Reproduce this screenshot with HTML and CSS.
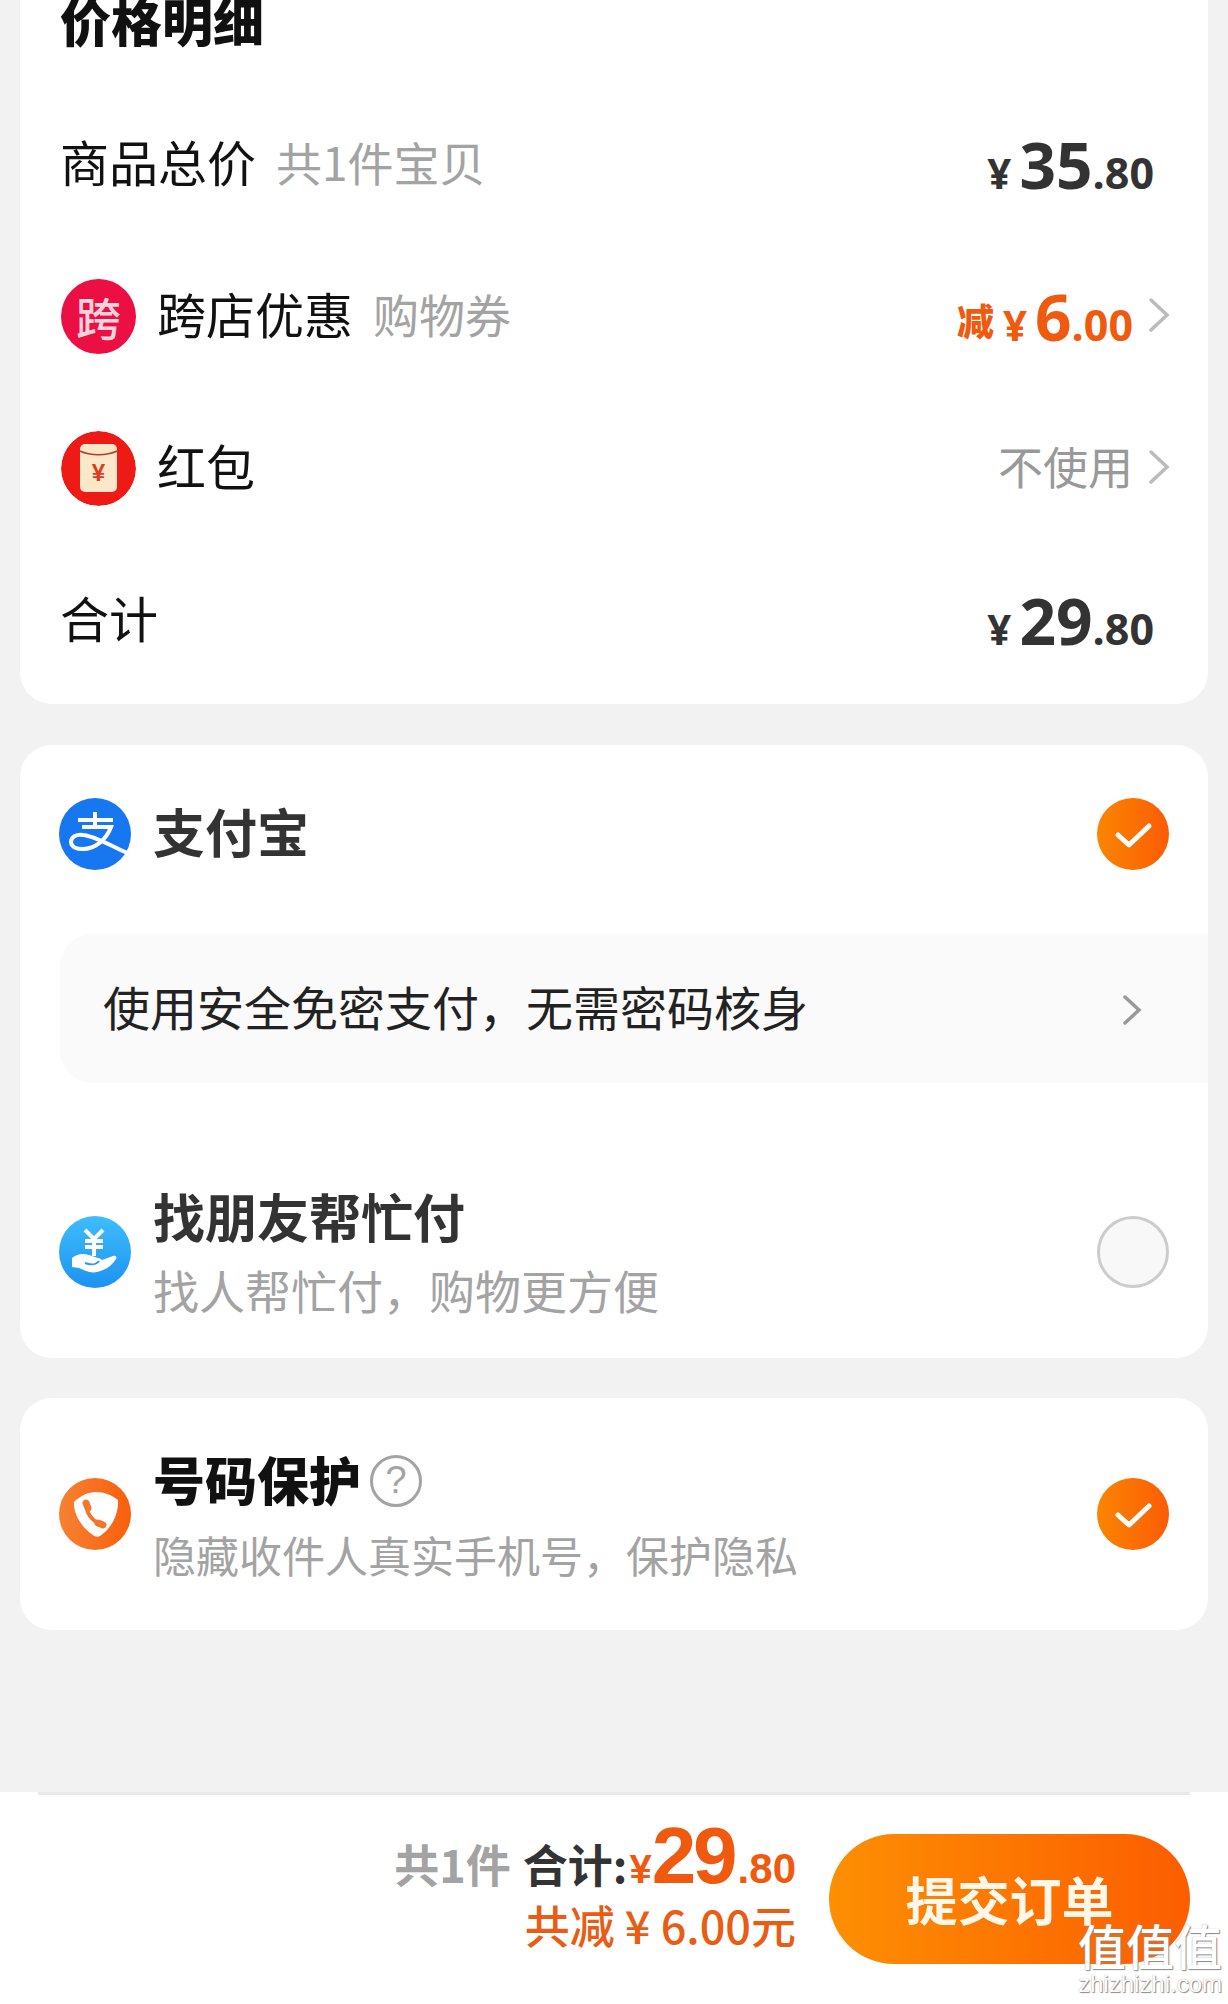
FILE: index.html
```html
<!DOCTYPE html>
<html lang="zh-CN">
<head>
    <meta charset="UTF-8">
    <meta name="viewport" content="width=device-width, initial-scale=1.0">
    <title>确认订单</title>
    <link rel="stylesheet" href="styles.css">
</head>
<body>
    <main class="page">
        <!-- 价格明细 -->
        <section class="card price-card">
            <h2 class="price-title">价格明细</h2>

            <div class="price-row">
                <span class="row-name">商品总价</span>
                <span class="row-note">共1件宝贝</span>
                <span class="amount plain">
                    <span class="yen">¥</span><span class="big">35</span><span class="small">.80</span>
                </span>
            </div>

            <div class="price-row">
                <span class="badge badge-cross">跨</span>
                <span class="row-name">跨店优惠</span>
                <span class="row-note">购物券</span>
                <span class="amount discount">
                    <span class="minus">减</span><span class="yen">¥</span><span class="big">6</span><span class="small">.00</span>
                </span>
                <svg class="arrow" viewBox="0 0 22 36"><path d="M3 3l16 15L3 33"/></svg>
            </div>

            <div class="price-row">
                <svg class="badge" viewBox="0 0 75 75">
                    <circle cx="37.5" cy="37.5" r="37.5" fill="#ee1a16"/>
                    <rect x="19" y="13" width="37" height="48" rx="5" fill="#fbe8c8"/>
                    <path class="packet-flap" d="M19 20c10 5 27 5 37 0"/>
                    <text class="packet-yen" x="37.5" y="50" text-anchor="middle">¥</text>
                </svg>
                <span class="row-name">红包</span>
                <span class="unused">不使用</span>
                <svg class="arrow" viewBox="0 0 22 36"><path d="M3 3l16 15L3 33"/></svg>
            </div>

            <div class="price-row">
                <span class="row-name">合计</span>
                <span class="amount plain">
                    <span class="yen">¥</span><span class="big">29</span><span class="small">.80</span>
                </span>
            </div>
        </section>

        <!-- 支付方式 -->
        <section class="card pay-card">
            <div class="pay-row alipay-row">
                <svg class="pay-icon" viewBox="0 0 72 72">
                    <circle cx="36" cy="36" r="36" fill="#1677f0"/>
                    <path class="alipay-mark" d="M19 22h35M36 14v14M23 29h29C47 42 36 51 24 51c-8 0-12-3-12-7 0-5 5-8 12-7 12 1 26 10 44 18"/>
                </svg>
                <span class="pay-name">支付宝</span>
                <span class="check">
                    <svg viewBox="0 0 72 72"><path d="M21 37l11 10 20-19"/></svg>
                </span>
            </div>

            <div class="free-pay">
                <span class="free-text">使用安全免密支付，无需密码核身</span>
                <svg class="free-arrow" viewBox="0 0 20 32"><path d="M3 3l14 13L3 29"/></svg>
            </div>

            <div class="pay-row friend-row">
                <svg class="pay-icon" viewBox="0 0 72 72">
                    <defs>
                        <linearGradient id="friendBg" x1="0" y1="0" x2="0" y2="1">
                            <stop offset="0" stop-color="#3fbdfc"/>
                            <stop offset="1" stop-color="#1c93f0"/>
                        </linearGradient>
                    </defs>
                    <circle cx="36" cy="36" r="36" fill="url(#friendBg)"/>
                    <path class="friend-yen" d="M26 14l9 9 9-9M26 25h18M26 31h18M35 23v17"/>
                    <path class="friend-hand" d="M13 42c5-4 11-5 17-3l9 3c2 0 3 1 4 2l11-4c3-1 4 1 3 3-3 5-8 9-13 11-6 3-12 3-17 1l-7-3-7-1z"/>
                    <path class="friend-palm" d="M26 47c5 2 11 2 14-2"/>
                </svg>
                <div class="pay-text">
                    <span class="pay-name">找朋友帮忙付</span>
                    <span class="pay-note">找人帮忙付，购物更方便</span>
                </div>
                <span class="radio"></span>
            </div>
        </section>

        <!-- 号码保护 -->
        <section class="card protect-card">
            <div class="pay-row protect-row">
                <svg class="pay-icon" viewBox="0 0 72 72">
                    <defs>
                        <linearGradient id="protectBg" x1="0" y1="0" x2="1" y2="0">
                            <stop offset="0" stop-color="#f58232"/>
                            <stop offset="1" stop-color="#f95f0c"/>
                        </linearGradient>
                    </defs>
                    <circle cx="36" cy="36" r="36" fill="url(#protectBg)"/>
                    <path fill="#fff" d="M37 14c8 0 16 3 22 8 1 14-7 29-18 36-2 1-5 1-7-1C23 50 14 36 15 24c6-6 14-10 22-10z"/>
                    <path class="phone" d="M28 27c-1 8 5 16 14 19"/>
                    <path class="phone-end" d="M27 25l2 5M39 45l5 2"/>
                </svg>
                <div class="pay-text">
                    <div class="name-line">
                        <span class="pay-name protect-name">号码保护</span>
                        <span class="help">?</span>
                    </div>
                    <span class="pay-note protect-note">隐藏收件人真实手机号，保护隐私</span>
                </div>
                <span class="check">
                    <svg viewBox="0 0 72 72"><path d="M21 37l11 10 20-19"/></svg>
                </span>
            </div>
        </section>

        <!-- 底部提交栏 -->
        <footer class="submit-bar">
            <div class="bar-line"></div>
            <div class="bar-body">
                <div class="submit-sum">
                    <div class="sum-line">
                        <span class="sum-count">共1件</span>
                        <span class="sum-label">合计:</span>
                        <span class="sum-yen">¥</span><span class="sum-big">29</span><span class="sum-small">.80</span>
                    </div>
                    <div class="sum-saved">共减 ¥ 6.00元</div>
                </div>
                <button class="submit-btn">提交订单</button>
            </div>
        </footer>
    </main>

    <div class="site-mark">
        <span class="mark-cn">值值值</span>
        <span class="mark-en">zhizhizhi.com</span>
    </div>
</body>
</html>
```

FILE: styles.css
```css
* {
    box-sizing: border-box;
}
html, body {
    margin: 0;
    height: 2004px;
    overflow: hidden;
}
body {
    position: relative;
    background-color: #f2f2f2;
    font-family: "Noto Sans CJK SC", "Liberation Sans", sans-serif;
    color: #111;
}
.page {
    display: flex;
    flex-direction: column;
    height: 2004px;
}
.card {
    margin: 0 20px;
    background-color: #fff;
    border-radius: 32px;
}

/* 价格明细 */
.price-card {
    height: 704px;
    border-radius: 0 0 32px 32px;
}
.price-title {
    height: 60px;
    margin: -10px 0 38px 40px;
    font-size: 51px;
    line-height: 60px;
    font-weight: 900;
}
.price-row {
    display: flex;
    align-items: center;
    height: 152px;
    padding: 0 38px 0 40px;
}
.row-name {
    margin-top: -6px;
    font-size: 49px;
    line-height: 60px;
}
.row-note {
    margin: -6px 0 0 20px;
    font-size: 46px;
    color: #a3a3a3;
}
.badge {
    display: flex;
    align-items: center;
    justify-content: center;
    flex-shrink: 0;
    width: 75px;
    height: 75px;
    margin: 0 21px 0 1px;
    border-radius: 50%;
}
.badge-cross {
    background-color: #ec0f43;
    color: #fbd3dd;
    font-size: 45px;
    font-weight: 500;
}
.packet-flap {
    fill: none;
    stroke: #b93a2c;
    stroke-width: 1.5;
}
.packet-yen {
    font-family: "Liberation Sans", sans-serif;
    font-size: 24px;
    font-weight: 700;
    fill: #dd3a22;
}
.amount {
    display: flex;
    align-items: baseline;
    margin-top: 3px;
    margin-left: auto;
    font-family: "Open Sans", sans-serif;
    font-weight: 700;
    color: #333;
}
.amount.plain {
    margin-right: 16px;
}
.amount.discount {
    color: #f05a0e;
}
.minus {
    align-self: flex-end;
    margin: 0 9px 14px 0;
    font-family: "Noto Sans CJK SC", sans-serif;
    font-size: 37px;
    line-height: 40px;
    font-weight: 900;
}
.yen {
    margin-right: 8px;
    font-size: 42px;
}
.big {
    font-size: 64px;
    line-height: 70px;
}
.small {
    font-size: 43px;
}
.arrow {
    flex-shrink: 0;
    width: 22px;
    height: 36px;
    margin-left: 15px;
    margin-top: -2px;
    fill: none;
    stroke: #bbb;
    stroke-width: 3.5;
    stroke-linecap: round;
}
.unused {
    margin-top: -5px;
    margin-left: auto;
    font-size: 45px;
    color: #999;
}

/* 支付方式 */
.pay-card {
    height: 613px;
    margin-top: 41px;
    overflow: hidden;
}
.pay-row {
    display: flex;
    align-items: center;
    padding: 0 39px;
}
.pay-icon {
    flex-shrink: 0;
    width: 72px;
    height: 72px;
    margin-right: 22px;
}
.pay-name {
    font-size: 52px;
    line-height: 60px;
    font-weight: 700;
    color: #333;
}
.alipay-row {
    height: 178px;
}
.alipay-row .pay-name {
    margin-top: -6px;
}
.alipay-mark {
    fill: none;
    stroke: #fff;
    stroke-width: 4;
}
.check {
    display: block;
    flex-shrink: 0;
    width: 72px;
    height: 72px;
    margin-left: auto;
    border-radius: 50%;
    background: linear-gradient(90deg, #fb8500, #fb5c05);
}
.check svg {
    display: block;
    fill: none;
    stroke: #fff;
    stroke-width: 5;
    stroke-linecap: round;
    stroke-linejoin: round;
}
.free-pay {
    display: flex;
    align-items: center;
    justify-content: space-between;
    height: 149px;
    margin: 11px 0 0 40px;
    padding: 0 66px 0 43px;
    border-radius: 32px 0 0 32px;
    background-color: #fafafa;
}
.free-text {
    margin-top: -6px;
    font-size: 47px;
    color: #222;
}
.free-arrow {
    width: 20px;
    height: 32px;
    margin-top: 2px;
    fill: none;
    stroke: #999;
    stroke-width: 3.5;
    stroke-linecap: round;
}
.friend-row {
    height: 218px;
    margin-top: 60px;
}
.friend-yen {
    fill: none;
    stroke: #fff;
    stroke-width: 4;
}
.friend-hand {
    fill: #fff;
}
.friend-palm {
    fill: none;
    stroke: #2a9cf0;
    stroke-width: 2;
}
.pay-text {
    display: flex;
    flex-direction: column;
}
.pay-note {
    font-size: 46px;
    line-height: 60px;
    color: #a3a3a3;
}
.friend-row .pay-name {
    margin-bottom: 13px;
}
.radio {
    flex-shrink: 0;
    width: 72px;
    height: 72px;
    margin-left: auto;
    border: 3px solid #ccc;
    border-radius: 50%;
    background-color: #f8f8f8;
}

/* 号码保护 */
.protect-card {
    height: 232px;
    margin-top: 40px;
}
.protect-row {
    height: 232px;
}
.protect-row .pay-text {
    margin-top: 4px;
}
.phone {
    fill: none;
    stroke: #f5762a;
    stroke-width: 4;
}
.phone-end {
    fill: none;
    stroke: #f5762a;
    stroke-width: 7;
    stroke-linecap: round;
}
.name-line {
    display: flex;
    align-items: center;
    margin-bottom: 15px;
}
.protect-name {
    font-weight: 900;
    color: #111;
}
.protect-note {
    font-size: 43px;
}
.help {
    display: flex;
    align-items: center;
    justify-content: center;
    width: 52px;
    height: 52px;
    margin: 4px 0 0 9px;
    border: 3px solid #a3a3a3;
    border-radius: 50%;
    font-family: "Liberation Sans", sans-serif;
    font-size: 38px;
    color: #a3a3a3;
}

/* 底部提交栏 */
.submit-bar {
    display: flex;
    flex-direction: column;
    height: 212px;
    margin-top: auto;
    background-color: #fff;
}
.bar-line {
    flex-shrink: 0;
    height: 3px;
    margin: 0 38px;
    background-color: #e9e9e9;
}
.bar-body {
    display: flex;
    flex: 1;
    align-items: center;
    justify-content: flex-end;
    padding-right: 38px;
}
.submit-sum {
    display: flex;
    flex-direction: column;
    align-items: flex-end;
    margin-right: 33px;
    margin-top: -23px;
}
.sum-line {
    display: flex;
    align-items: baseline;
    height: 74px;
    font-weight: 700;
}
.sum-count {
    margin-right: 12px;
    font-size: 45px;
    color: #a3a3a3;
}
.sum-label {
    margin-right: 2px;
    font-size: 45px;
    color: #333;
}
.sum-yen, .sum-big, .sum-small {
    font-family: "Liberation Sans", sans-serif;
    color: #f05a0e;
}
.sum-yen {
    font-size: 40px;
}
.sum-big {
    font-size: 80px;
    line-height: 70px;
    letter-spacing: -3px;
}
.sum-small {
    margin-left: 3px;
    font-size: 42px;
}
.sum-saved {
    font-size: 45px;
    line-height: 60px;
    font-weight: 500;
    color: #e85c14;
}
.submit-btn {
    width: 361px;
    height: 130px;
    margin-top: -2px;
    border: none;
    border-radius: 65px;
    background: linear-gradient(90deg, #fd8f02, #fc5d00);
    font-family: inherit;
    font-size: 52px;
    font-weight: 700;
    color: #fff8ea;
}

/* 右下角站点水印 */
.site-mark {
    position: absolute;
    right: 6px;
    bottom: 7px;
    display: flex;
    flex-direction: column;
    align-items: center;
    color: #fff;
    text-shadow: 1px 1px 1px #888, 0 0 1px #999;
}
.mark-cn {
    margin-bottom: 3px;
    font-size: 48px;
    line-height: 48px;
    font-weight: 500;
}
.mark-en {
    font-family: "Liberation Sans", sans-serif;
    font-size: 24px;
    line-height: 26px;
}
```
